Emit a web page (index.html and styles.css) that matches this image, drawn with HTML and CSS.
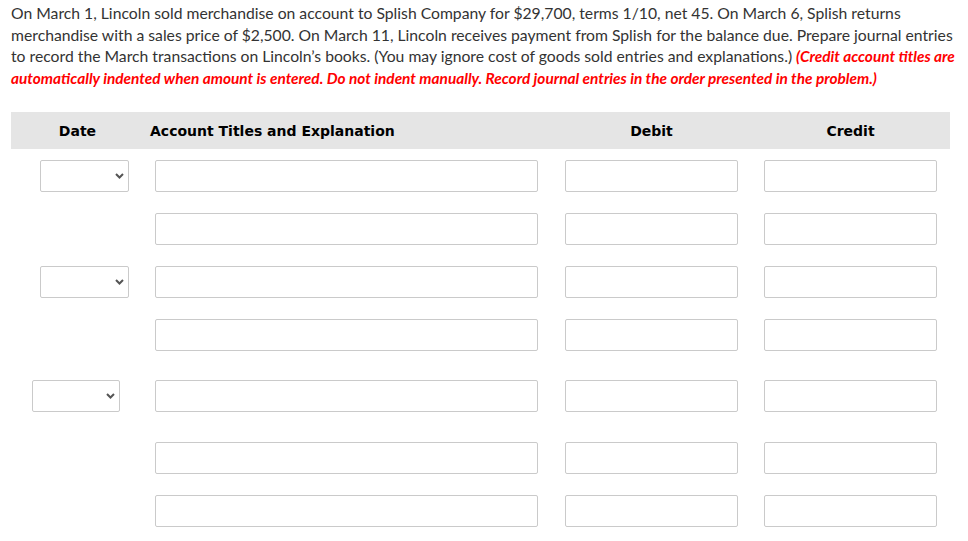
FILE: index.html
```html
<!DOCTYPE html>
<html lang="en">
<head>
<meta charset="utf-8">
<title>Journal entries</title>
<link rel="stylesheet" href="styles.css">
</head>
<body>
<div class="page">
  <p class="question">On March 1, Lincoln sold merchandise on account to Splish Company for $29,700, terms 1/10, net 45. On March 6, Splish returns merchandise with a sales price of $2,500. On March 11, Lincoln receives payment from Splish for the balance due. Prepare journal entries to record the March transactions on Lincoln’s books. (You may ignore cost of goods sold entries and explanations.) <span class="note">(Credit account titles are automatically indented when amount is entered. Do not indent manually. Record journal entries in the order presented in the problem.)</span></p>

  <div class="journal">
    <div class="row head">
      <div class="h-date">Date</div>
      <div class="h-acct">Account Titles and Explanation</div>
      <div class="h-debit">Debit</div>
      <div class="h-credit">Credit</div>
    </div>

    <div class="row line first">
      <div class="cell"><div class="select sel-a"><svg width="9" height="6" viewBox="0 0 9 6"><path d="M1 1 L4.5 4.5 L8 1" fill="none" stroke="#555" stroke-width="2"/></svg></div></div>
      <div class="cell"><div class="field f-acct"></div></div>
      <div class="cell"><div class="field f-debit"></div></div>
      <div class="cell"><div class="field f-credit"></div></div>
    </div>
    <div class="row line">
      <div class="cell"></div>
      <div class="cell"><div class="field f-acct"></div></div>
      <div class="cell"><div class="field f-debit"></div></div>
      <div class="cell"><div class="field f-credit"></div></div>
    </div>

    <div class="row line">
      <div class="cell"><div class="select sel-a"><svg width="9" height="6" viewBox="0 0 9 6"><path d="M1 1 L4.5 4.5 L8 1" fill="none" stroke="#555" stroke-width="2"/></svg></div></div>
      <div class="cell"><div class="field f-acct"></div></div>
      <div class="cell"><div class="field f-debit"></div></div>
      <div class="cell"><div class="field f-credit"></div></div>
    </div>
    <div class="row line">
      <div class="cell"></div>
      <div class="cell"><div class="field f-acct"></div></div>
      <div class="cell"><div class="field f-debit"></div></div>
      <div class="cell"><div class="field f-credit"></div></div>
    </div>

    <div class="row line gap-a">
      <div class="cell"><div class="select sel-b"><svg width="9" height="6" viewBox="0 0 9 6"><path d="M1 1 L4.5 4.5 L8 1" fill="none" stroke="#555" stroke-width="2"/></svg></div></div>
      <div class="cell"><div class="field f-acct"></div></div>
      <div class="cell"><div class="field f-debit"></div></div>
      <div class="cell"><div class="field f-credit"></div></div>
    </div>
    <div class="row line gap-b">
      <div class="cell"></div>
      <div class="cell"><div class="field f-acct"></div></div>
      <div class="cell"><div class="field f-debit"></div></div>
      <div class="cell"><div class="field f-credit"></div></div>
    </div>
    <div class="row line">
      <div class="cell"></div>
      <div class="cell"><div class="field f-acct"></div></div>
      <div class="cell"><div class="field f-debit"></div></div>
      <div class="cell"><div class="field f-credit"></div></div>
    </div>
  </div>
</div>
</body>
</html>
```

FILE: styles.css
```css
html, body {
  margin: 0;
  padding: 0;
  background: #fff;
}

.page {
  padding-left: 11px;
  width: 950px;
}

.question {
  margin: 0;
  padding-top: 2px;
  font-family: Lato, "Liberation Sans", sans-serif;
  font-size: 15.72px;
  line-height: 21.67px;
  color: #333;
}

.note {
  color: #f00;
  font-weight: bold;
  font-style: italic;
  font-size: 15.4px;
  line-height: 1;
}

.journal {
  margin-top: 23px;
  width: 939px;
}

.row {
  display: grid;
  grid-template-columns: 133px 410px 200px 196px;
}

.head {
  box-sizing: border-box;
  height: 37px;
  padding-top: 2px;
  align-items: center;
  background: #e5e5e5;
  font-family: "DejaVu Sans", Verdana, sans-serif;
  font-weight: bold;
  font-size: 14px;
  color: #000;
}

.h-date {
  text-align: center;
}

.h-acct {
  padding-left: 6px;
}

.h-debit {
  padding-left: 11px;
  padding-right: 16px;
  text-align: center;
}

.h-credit {
  padding-left: 10px;
  padding-right: 13px;
  text-align: center;
}

.line {
  height: 32px;
  margin-top: 21px;
}

.line.first {
  margin-top: 11px;
}

.line.gap-a {
  margin-top: 29px;
}

.line.gap-b {
  margin-top: 30px;
}

.field,
.select {
  box-sizing: border-box;
  height: 32px;
  border: 1px solid #cacaca;
  border-radius: 2px;
  background: #fff;
}

.f-acct {
  margin-left: 11px;
  width: 383px;
}

.f-debit {
  margin-left: 11px;
  width: 173px;
}

.f-credit {
  margin-left: 10px;
  width: 173px;
}

.select {
  display: flex;
  align-items: center;
  justify-content: flex-end;
  padding-right: 4px;
}

.select svg {
  display: block;
}

.sel-a {
  margin-left: 29px;
  width: 89px;
}

.sel-b {
  margin-left: 21px;
  width: 88px;
}
```
